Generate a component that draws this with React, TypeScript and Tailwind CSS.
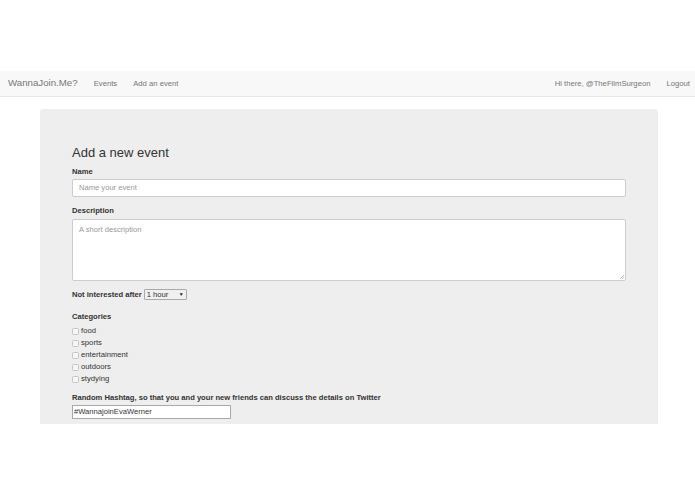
const categories = ['food', 'sports', 'entertainment', 'outdoors', 'stydying'];

const NavBar = () => (
  <div className="flex h-[26px] items-center border-b border-[#e7e7e7] bg-[#f8f8f8] text-[#777]">
    <span className="ml-[8px] text-[9.7px]">WannaJoin.Me?</span>
    <span className="ml-[16px] text-[7.7px]">Events</span>
    <span className="ml-[16px] text-[7.7px]">Add an event</span>
    <span className="ml-auto text-[7.7px]">Hi there, @TheFilmSurgeon</span>
    <span className="ml-[16px] mr-[5px] text-[7.7px]">Logout</span>
  </div>
);

const Label = ({ children }: { children: React.ReactNode }) => (
  <div className="h-[10px] text-[7.6px] font-bold leading-[12px] text-[#333]">{children}</div>
);

export default function App() {
  return (
    <div className="min-h-screen bg-white font-['Liberation_Sans',Arial,sans-serif] text-[#333]">
      <div className="h-[71px]" />
      <NavBar />

      <div className="mx-[40px] mt-[12px] w-[618px] rounded-t-[3px] bg-[#eee] px-[32px] pb-[5px] pt-[36px]">
        <div className="h-[16px] text-[13px] leading-[16px]">Add a new event</div>

        <div className="mt-[5px]">
          <Label>Name</Label>
        </div>
        <div className="mt-[3px] flex h-[18px] items-center rounded-[2px] border border-[#ccc] bg-white px-[6px] text-[7.6px] text-[#999]">
          Name your event
        </div>

        <div className="mt-[8px]">
          <Label>Description</Label>
        </div>
        <div className="relative mt-[4px] h-[62px] rounded-[2px] border border-[#ccc] bg-white px-[6px] pt-[4px] text-[7.6px] text-[#999]">
          A short description
          <svg className="absolute bottom-[1px] right-[1px]" width="5" height="5" viewBox="0 0 5 5">
            <path d="M1 5 L5 1 M3 5 L5 3" stroke="#aaa" strokeWidth="0.7" />
          </svg>
        </div>

        <div className="mt-[8px] flex h-[11px] items-center">
          <div className="text-[7.6px] font-bold text-[#333]">Not interested after</div>
          <div className="ml-[2px] flex h-[11px] w-[43px] items-center rounded-[1px] border border-[#aaa] bg-[#f0f0f0] px-[2px] text-[7.7px] text-[#333]">
            1 hour
            <span className="ml-auto text-[5px] text-[#222]">▼</span>
          </div>
        </div>

        <div className="mt-[11px]">
          <Label>Categories</Label>
        </div>
        <div className="mt-[4px] flex flex-col">
          {categories.map((c) => (
            <div key={c} className="flex h-[12px] items-center">
              <span className="h-[7px] w-[7px] rounded-[1.5px] border border-[#c4c4c4] bg-[#f6f6f6]" />
              <span className="ml-[2px] text-[7.7px] text-[#333]">{c}</span>
            </div>
          ))}
        </div>

        <div className="mt-[7px]">
          <Label>Random Hashtag, so that you and your new friends can discuss the details on Twitter</Label>
        </div>
        <div className="mt-[3px] flex h-[14px] w-[159px] items-center border border-[#aaa] bg-white px-[1px] text-[7.6px] text-[#333]">
          #WannajoinEvaWerner
        </div>
      </div>
    </div>
  );
}
